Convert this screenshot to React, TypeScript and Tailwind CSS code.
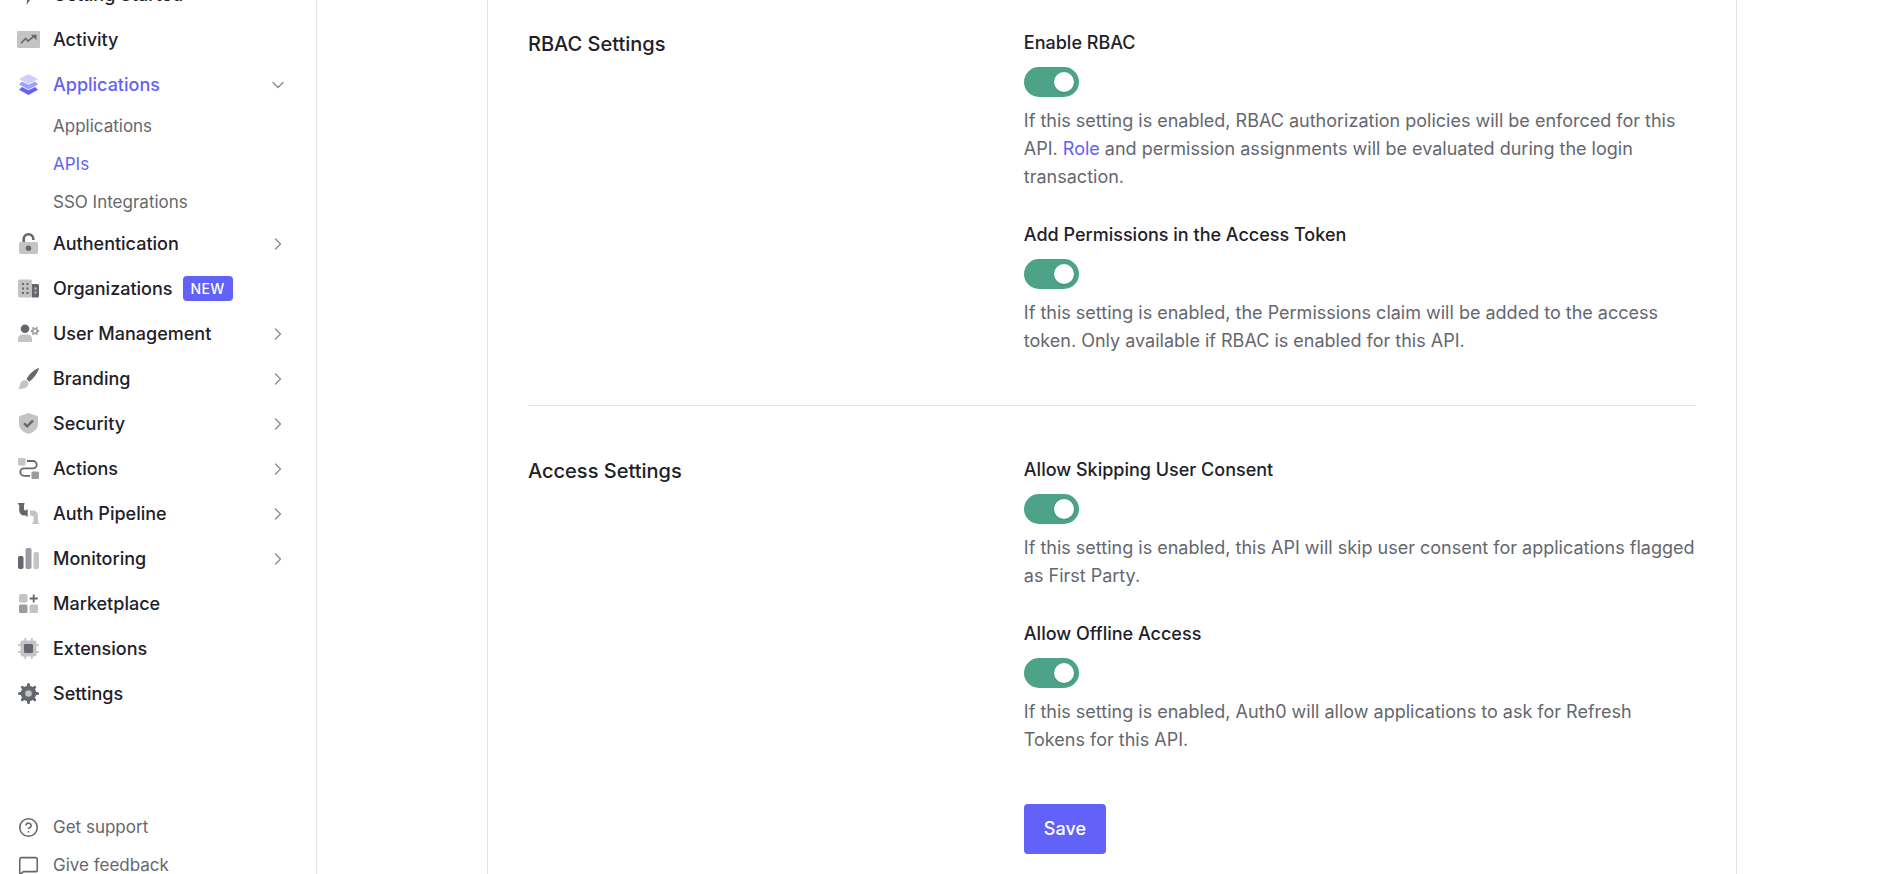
import React, { ReactNode } from "react";
import { ChevronDown, ChevronRight, CircleHelp, MessageSquare } from "lucide-react";

const dark = "#65676e";
const mid = "#9b9c9f";
const light = "#c4c4c4";

function Icon({ children }: { children: ReactNode }) {
  return (
    <svg viewBox="0 0 21 21" fill="none" aria-hidden="true" className="size-[21px] shrink-0 overflow-visible">
      {children}
    </svg>
  );
}

const icons: Record<string, ReactNode> = {
  bolt: <path d="M12 0 4 12h5.5l-1 9L17 9h-5.5z" fill={dark} />,
  activity: (
    <>
      <rect x="-1" y="2" width="23" height="17" rx="1.2" fill={light} />
      <path d="m3 14.3 4.7-4.8L10 12.2l6-5" stroke={dark} strokeWidth="1.6" />
      <path d="M13 5.8h5.5v5.5z" fill={dark} />
    </>
  ),
  layers: (
    <>
      <path d="m10.5 0 9.5 5-9.5 5L1 5z" fill="#d0cffb" />
      <path d="M4 7.6 1 10.4l9.5 5.2 9.5-5.2-3-2.8-6.5 3.2z" fill="#a1a0f9" />
      <path d="M4 13 1 15.8 10.5 21l9.5-5.2-3-2.8-6.5 3.2z" fill="#6262f8" />
    </>
  ),
  lock: (
    <>
      <rect x="1" y="9" width="19" height="12" rx="1.8" fill={light} />
      <path d="M5.7 9V6a4.8 4.8 0 0 1 9.6 0v1" stroke={dark} strokeWidth="2.6" />
      <circle cx="10.5" cy="15.3" r="2.7" fill={dark} />
    </>
  ),
  building: (
    <>
      <rect x="0" y="1.5" width="14" height="18" rx="1.5" fill={light} />
      <path d="M14 6h5.5a1.5 1.5 0 0 1 1.5 1.5V18a1.5 1.5 0 0 1-1.5 1.5H14z" fill={dark} />
      <path d="M4 5h2v2H4zM8.5 5h2v2h-2zM4 9.5h2v2H4zM8.5 9.5h2v2h-2zM4 14h2v2H4zM8.5 14h2v2h-2z" fill={dark} />
      <path d="M16.5 9.5h2v2h-2zM16.5 13.5h2v2h-2z" fill={light} />
    </>
  ),
  user: (
    <>
      <circle cx="7" cy="5.8" r="4.3" fill={dark} />
      <path d="M0 19v-3a4.5 4.5 0 0 1 4.5-4.5h5A4.5 4.5 0 0 1 14 16v3z" fill={light} />
      <circle cx="17" cy="8" r="2.3" stroke={mid} strokeWidth="1.6" />
      <path
        d="M19.9 8h1.3M14.1 8h-1.3M18.5 5.5l.7-1.2M15.5 10.5l-.7 1.2M15.5 5.5l-.7-1.2M18.5 10.5l.7 1.2"
        stroke={mid}
        strokeWidth="1.9"
      />
    </>
  ),
  brush: (
    <>
      <path d="M21 0c-4 1-10 6-12.5 11l2.8 2.8C16 10 20.5 4 21 0z" fill={dark} />
      <path d="M7.5 12.3a3.6 3.6 0 0 1 2.8 4C10 19.5 6 21 0 21c1.7-1.5 1.5-3 2.2-5.3.8-2.5 3-3.8 5.3-3.4z" fill={light} />
    </>
  ),
  shield: (
    <>
      <path d="M10.5 0 20 3.2V11c0 5-4.5 8.3-9.5 10C5.5 19.3 1 16 1 11V3.2z" fill={light} />
      <path d="m6 10.2 3.2 3.2 5.8-6" stroke={dark} strokeWidth="2.3" />
    </>
  ),
  actions: (
    <>
      <path d="M9 3h6a3.7 3.7 0 0 1 0 7.400H6a3.700 3.700 0 0 0 0 7.400h6" stroke={dark} strokeWidth="1.8" />
      <rect x="0" y="0" width="7.5" height="7.5" rx="1" fill={light} />
      <rect x="13.5" y="13.5" width="7.5" height="7.5" rx="1" fill={mid} />
    </>
  ),
  pipeline: (
    <>
      <path d="M0 0h6.500v1.500H6V6a1.500 1.500 0 0 0 1.500 1.500h.7v-1h1.500v7H8.200v-1H6.500A5 5 0 0 1 1.200 7V1.500H0z" fill={dark} />
      <path d="M12 7.500h3a5 5 0 0 1 5 5v6.700h1V21h-6.500v-1.800h1v-5a1.500 1.500 0 0 0-1.500-1.500h-2z" fill={light} />
    </>
  ),
  bars: (
    <>
      <rect x="0" y="8" width="5.5" height="13" rx="1.8" fill={dark} />
      <rect x="7.5" y="0" width="6" height="21" rx="1.8" fill={mid} />
      <rect x="15.5" y="4" width="5.5" height="17" rx="1.8" fill={light} />
    </>
  ),
  market: (
    <>
      <rect x="1" y="1" width="8.5" height="8.5" rx="1.5" fill={light} />
      <rect x="1" y="11.5" width="8.5" height="8.5" rx="1.5" fill={mid} />
      <rect x="11.5" y="11.5" width="8.5" height="8.5" rx="1.5" fill={light} />
      <path d="M15.7 1.5v8M11.7 5.5h8" stroke={dark} strokeWidth="1.8" />
    </>
  ),
  chip: (
    <>
      <path d="M7.2 0v21M13.8 0v21M0 7.2h21M0 13.8h21" stroke={light} strokeWidth="1.8" />
      <rect x="2.5" y="2.5" width="16" height="16" rx="2" fill={light} />
      <rect x="6" y="6" width="9" height="9" rx="1.2" fill={dark} />
    </>
  ),
  gear: (
    <>
      <circle cx="10.5" cy="10.5" r="7.8" fill={dark} />
      <path d="M10.5 1.5v18M1.5 10.5h18M4.3 4.3l12.4 12.4M16.7 4.3 4.3 16.7" stroke={dark} strokeWidth="3" strokeLinecap="round" />
      <circle cx="10.5" cy="10.5" r="3.3" fill={light} />
    </>
  ),
};

type Item = { label: string; icon: string; expand?: boolean; badge?: string; children?: string[] };

const items: Item[] = [
  { label: "Getting Started", icon: "bolt" },
  { label: "Activity", icon: "activity" },
  { label: "Applications", icon: "layers", children: ["Applications", "APIs", "SSO Integrations"] },
  { label: "Authentication", icon: "lock", expand: true },
  { label: "Organizations", icon: "building", badge: "NEW" },
  { label: "User Management", icon: "user", expand: true },
  { label: "Branding", icon: "brush", expand: true },
  { label: "Security", icon: "shield", expand: true },
  { label: "Actions", icon: "actions", expand: true },
  { label: "Auth Pipeline", icon: "pipeline", expand: true },
  { label: "Monitoring", icon: "bars", expand: true },
  { label: "Marketplace", icon: "market" },
  { label: "Extensions", icon: "chip" },
  { label: "Settings", icon: "gear" },
];

function Sidebar() {
  return (
    <aside className="flex w-[317px] shrink-0 flex-col overflow-hidden border-r border-[#e3e3e5]">
      <nav aria-label="Main" className="-mt-7">
        <ul>
          {items.map((item) => (
            <li key={item.label}>
              <a
                href="#"
                className={
                  "flex h-[45px] items-center gap-3.5 pr-7 pl-[18px] text-lg font-medium " +
                  (item.children ? "text-[#6262f8]" : "text-[#1e212a]")
                }
              >
                <Icon>{icons[item.icon]}</Icon>
                <span className="whitespace-nowrap">{item.label}</span>
                {item.badge && (
                  <span className="-ml-1 flex h-[25px] items-center rounded bg-[#6262f8] px-2 text-sm font-medium tracking-wide text-white">
                    {item.badge}
                  </span>
                )}
                {item.children && <ChevronDown className="ml-auto size-5 text-[#8a8b90]" strokeWidth={1.6} />}
                {item.expand && <ChevronRight className="ml-auto size-5 text-[#8a8b90]" strokeWidth={1.6} />}
              </a>
              {item.children && (
                <ul>
                  {item.children.map((child) => (
                    <li key={child}>
                      <a
                        href="#"
                        className={
                          "flex h-[38px] items-center pl-[53px] text-[17px] leading-[26px] " +
                          (child === "APIs" ? "text-[#6262f8]" : "text-[#65676e]")
                        }
                      >
                        {child}
                      </a>
                    </li>
                  ))}
                </ul>
              )}
            </li>
          ))}
        </ul>
      </nav>
      <ul className="mt-[92px] text-[17px] leading-[26px] text-[#65676e]">
        <li>
          <a href="#" className="flex h-[38px] items-center gap-3.5 pl-[18px]">
            <CircleHelp className="size-[21px]" strokeWidth={1.8} />
            Get support
          </a>
        </li>
        <li>
          <a href="#" className="flex h-[38px] items-center gap-3.5 pl-[18px]">
            <MessageSquare className="size-[21px]" strokeWidth={1.8} />
            Give feedback
          </a>
        </li>
      </ul>
    </aside>
  );
}

function Toggle({ id, label, children }: { id: string; label: string; children: ReactNode }) {
  return (
    <div>
      <label htmlFor={id} className="block font-medium text-[#1e212a]">
        {label}
      </label>
      <input
        id={id}
        type="checkbox"
        role="switch"
        defaultChecked
        className="my-2.5 flex h-[30px] w-[55px] cursor-pointer appearance-none items-center rounded-full bg-[#c4c4c4] px-[5px] before:size-5 before:rounded-full before:bg-white before:shadow-sm checked:justify-end checked:bg-[#4ca387]"
      />
      <p className="text-[#65676e]">{children}</p>
    </div>
  );
}

function Section({ title, children }: { title: string; children: ReactNode }) {
  return (
    <section className="grid grid-cols-12 gap-x-[22px]">
      <h2 className="col-span-5 text-xl leading-[30px] font-medium text-[#1e212a]">{title}</h2>
      <div className="col-span-7 flex flex-col gap-[30px] text-lg leading-7">{children}</div>
    </section>
  );
}

export default function App() {
  return (
    <div className="flex h-screen overflow-hidden bg-white font-['Inter',sans-serif]">
      <Sidebar />
      <main className="flex flex-1 justify-center overflow-hidden pl-1.5">
        <div className="w-full max-w-[1250px] border-x border-[#e3e3e5] px-10 pt-[29px]">
          <Section title="RBAC Settings">
            <Toggle id="rbac" label="Enable RBAC">
              If this setting is enabled, RBAC authorization policies will be enforced for this API.{" "}
              <a href="#" className="text-[#6262f8]">
                Role
              </a>{" "}
              and permission assignments will be evaluated during the login transaction.
            </Toggle>
            <Toggle id="permissions" label="Add Permissions in the Access Token">
              If this setting is enabled, the Permissions claim will be added to the access token. Only available if
              RBAC is enabled for this API.
            </Toggle>
          </Section>
          <hr className="my-[50px] border-[#e3e3e5]" />
          <Section title="Access Settings">
            <Toggle id="consent" label="Allow Skipping User Consent">
              If this setting is enabled, this API will skip user consent for applications flagged as First Party.
            </Toggle>
            <Toggle id="offline" label="Allow Offline Access">
              If this setting is enabled, Auth0 will allow applications to ask for Refresh Tokens for this API.
            </Toggle>
            <button
              type="button"
              className="mt-5 h-[50px] cursor-pointer self-start rounded bg-[#6262f8] px-5 font-medium text-white"
            >
              Save
            </button>
          </Section>
        </div>
      </main>
    </div>
  );
}
